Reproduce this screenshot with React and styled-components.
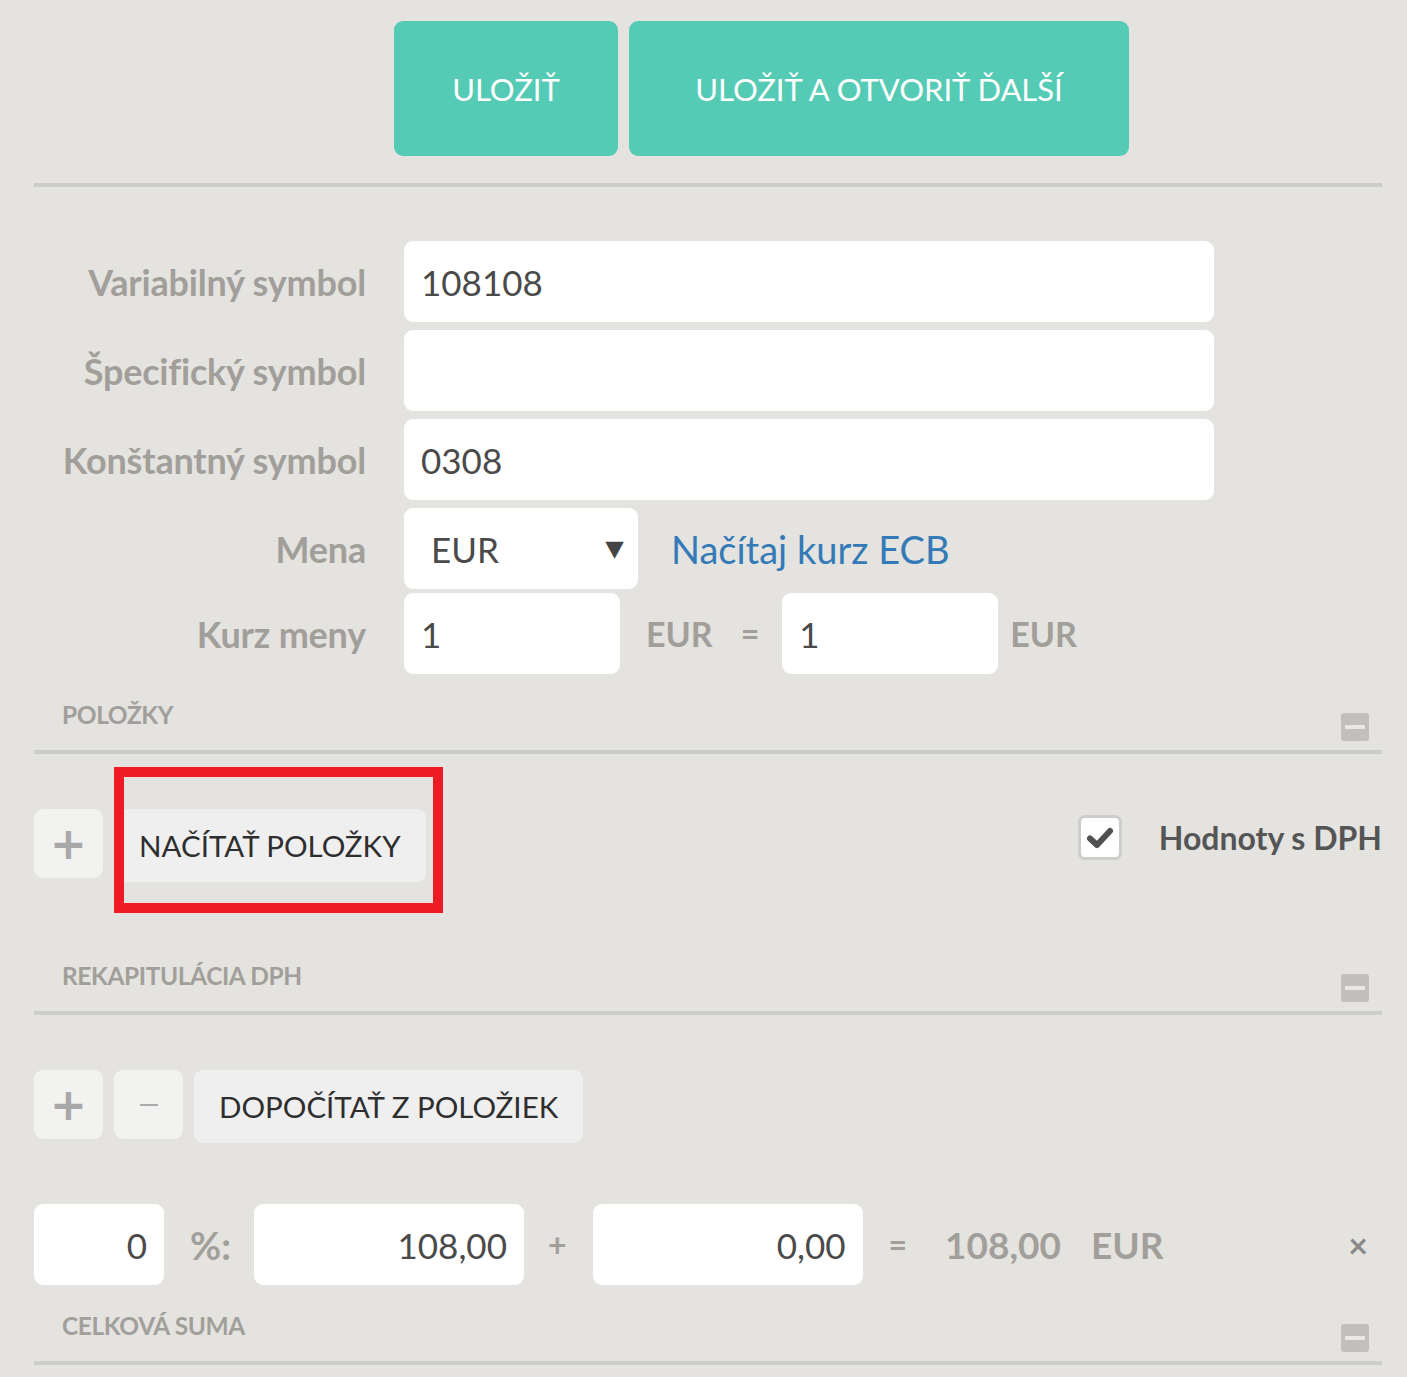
import React from 'react'
import styled, { createGlobalStyle } from 'styled-components'

const GlobalStyle = createGlobalStyle`
  body {
    margin: 0;
    background: #e4e3df;
    font-family: Lato, "Open Sans", sans-serif;
  }
`

function CollapseIcon() {
  return (
    <StyledCollapse>
      <span />
    </StyledCollapse>
  )
}

function Section({ title }) {
  return (
    <SectionHead>
      <SectionTitle>{title}</SectionTitle>
      <CollapseIcon />
    </SectionHead>
  )
}

function App() {
  return (
    <Page>
      <GlobalStyle />
      <TopBar>
        <SaveButton width='224px'>ULOŽIŤ</SaveButton>
        <SaveButton width='500px'>ULOŽIŤ A OTVORIŤ ĎALŠÍ</SaveButton>
      </TopBar>
      <Divider />

      <Form>
        <Label>Variabilný symbol</Label>
        <TextInput width='810px'>108108</TextInput>

        <Label>Špecifický symbol</Label>
        <TextInput width='810px' />

        <Label>Konštantný symbol</Label>
        <TextInput width='810px'>0308</TextInput>

        <Label>Mena</Label>
        <InlineRow>
          <Select>
            <span>EUR</span>
            <Arrow>▼</Arrow>
          </Select>
          <Link>Načítaj kurz ECB</Link>
        </InlineRow>

        <Label tight>Kurz meny</Label>
        <InlineRow tight>
          <TextInput width='216px'>1</TextInput>
          <Unit gap='26px'>EUR</Unit>
          <Op m='0 23px 0 28px'>=</Op>
          <TextInput width='216px'>1</TextInput>
          <Unit gap='12px'>EUR</Unit>
        </InlineRow>
      </Form>

      <Section title='POLOŽKY' />

      <ItemsRow>
        <IconButton>+</IconButton>
        <Highlight>
          <GrayButton>NAČÍTAŤ POLOŽKY</GrayButton>
        </Highlight>
        <CheckWrap>
          <CheckBox>
            <svg width='28' height='24' viewBox='0 0 28 24'>
              <path d='M4 12.5 L11 19 L24 5' fill='none' stroke='#505050' strokeWidth='6' strokeLinecap='round' strokeLinejoin='round' />
            </svg>
          </CheckBox>
          <CheckLabel>Hodnoty s DPH</CheckLabel>
        </CheckWrap>
      </ItemsRow>

      <Section title='REKAPITULÁCIA DPH' />

      <ButtonsRow>
        <IconButton>+</IconButton>
        <IconButton light>
          <MinusBar />
        </IconButton>
        <GrayButton>DOPOČÍTAŤ Z POLOŽIEK</GrayButton>
      </ButtonsRow>

      <VatRow>
        <NumInput width='130px'>0</NumInput>
        <Op m='0 23px 0 26px' size='38px'>%:</Op>
        <NumInput width='270px'>108,00</NumInput>
        <Op m='0 26px 0 24px'>+</Op>
        <NumInput width='270px'>0,00</NumInput>
        <Op m='0 38px 0 26px'>=</Op>
        <Total>108,00</Total>
        <Total gap='30px'>EUR</Total>
        <Remove>×</Remove>
      </VatRow>

      <Section title='CELKOVÁ SUMA' />
    </Page>
  )
}

const Page = styled.div`
  padding: 21px 25px 0 34px;
`

const TopBar = styled.div`
  display: flex;
  gap: 11px;
  padding-left: 360px;
`

const SaveButton = styled.button`
  width: ${p => p.width};
  height: 135px;
  border: none;
  border-radius: 9px;
  background: #55cbb5;
  color: #fff;
  font-family: Lato, sans-serif;
  font-size: 31px;
  padding: 0;
`

const Divider = styled.div`
  height: 4px;
  background: #cccccb;
  margin-top: 27px;
`

const Form = styled.div`
  display: grid;
  grid-template-columns: 332px auto;
  column-gap: 38px;
  row-gap: 8px;
  margin: 54px 0 26px;
  align-items: center;
`

const Label = styled.div`
  text-align: right;
  font-weight: 700;
  font-size: 36px;
  color: #a29f9b;
  letter-spacing: -0.2px;
  margin-top: ${p => (p.tight ? '-4px' : '0')};
`

const TextInput = styled.div`
  box-sizing: border-box;
  width: ${p => p.width};
  height: 81px;
  background: #fff;
  border-radius: 9px;
  padding: 0 17px;
  display: flex;
  align-items: center;
  font-size: 35px;
  color: #4a4a4a;
`

const NumInput = styled(TextInput)`
  justify-content: flex-end;
`

const InlineRow = styled.div`
  display: flex;
  align-items: center;
  margin-top: ${p => (p.tight ? '-4px' : '0')};
`

const Select = styled.div`
  box-sizing: border-box;
  width: 234px;
  height: 81px;
  background: #fff;
  border-radius: 9px;
  padding: 0 15px 0 27px;
  display: flex;
  align-items: center;
  justify-content: space-between;
  font-size: 35px;
  color: #4a4a4a;
`

const Arrow = styled.span`
  font-family: "DejaVu Sans", sans-serif;
  font-size: 22px;
  color: #444;
  transform: scaleX(1.1);
`

const Link = styled.a`
  margin-left: 33px;
  font-size: 38px;
  color: #337ab7;
  cursor: pointer;
`

const Unit = styled.span`
  font-weight: 700;
  font-size: 34px;
  color: #a29f9b;
  margin-left: ${p => p.gap};
`

const Op = styled.span`
  font-weight: 700;
  font-size: ${p => p.size || '32px'};
  color: #a29f9b;
  margin: ${p => p.m};
`

const SectionHead = styled.div`
  display: flex;
  justify-content: space-between;
  align-items: flex-end;
  padding: 0 13px 9px 28px;
  border-bottom: 4px solid #cccccb;
`

const SectionTitle = styled.div`
  font-weight: 700;
  font-size: 24.5px;
  line-height: 30px;
  color: #a29f9b;
  letter-spacing: -0.4px;
  padding-bottom: 11px;
`

const StyledCollapse = styled.div`
  width: 28px;
  height: 28px;
  border-radius: 3px;
  background: #c2c0bc;
  display: flex;
  align-items: center;
  justify-content: center;

  span {
    width: 20px;
    height: 4px;
    background: #e9e8e5;
  }
`

const ItemsRow = styled.div`
  display: flex;
  align-items: flex-start;
  padding: 55px 0 48px;
`

const ButtonsRow = styled.div`
  display: flex;
  align-items: flex-start;
  gap: 11px;
  padding-top: 55px;
`

const IconButton = styled.div`
  width: 69px;
  height: 69px;
  border-radius: 9px;
  background: #f2f2f0;
  display: flex;
  align-items: center;
  justify-content: center;
  font-weight: 900;
  font-size: 44px;
  color: #a8a8a8;
  font-family: "DejaVu Sans", sans-serif;
`

const MinusBar = styled.span`
  width: 18px;
  height: 2px;
  background: #aaa;
`

const GrayButton = styled.div`
  height: 73px;
  border-radius: 9px;
  background: #efefef;
  display: flex;
  align-items: center;
  padding: 0 25px;
  font-size: 29.5px;
  color: #2e2e2e;
  font-family: Lato, sans-serif;
`

const Highlight = styled.div`
  margin: -42px 0 0 11px;
  position: relative;
  padding: 42px 17px 31px 0;

  &::after {
    content: '';
    position: absolute;
    inset: 0;
    border: 10px solid #ed1c24;
    pointer-events: none;
  }
`

const CheckWrap = styled.div`
  margin: 6px 0 0 auto;
  display: flex;
  align-items: center;
  gap: 37px;
`

const CheckBox = styled.div`
  box-sizing: border-box;
  width: 44px;
  height: 45px;
  border: 3px solid #cdcdcd;
  border-radius: 7px;
  background: #fff;
  display: flex;
  align-items: center;
  justify-content: center;
`

const CheckLabel = styled.span`
  font-weight: 700;
  font-size: 32px;
  color: #555;
`

const VatRow = styled.div`
  display: flex;
  align-items: center;
  padding: 61px 0 26px;
`

const Total = styled.span`
  font-weight: 700;
  font-size: 37px;
  color: #a29f9b;
  margin-left: ${p => p.gap || '0'};
`

const Remove = styled.span`
  margin-left: auto;
  margin-right: 14px;
  font-weight: 700;
  font-size: 34px;
  color: #8a8a8a;
`

export default App
